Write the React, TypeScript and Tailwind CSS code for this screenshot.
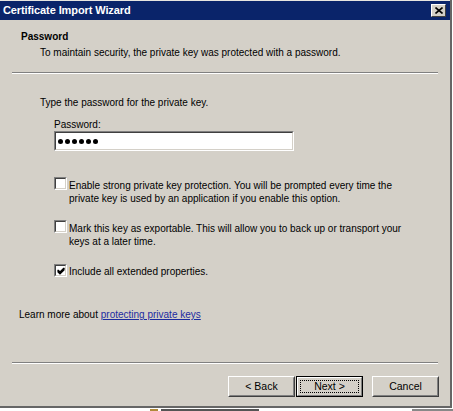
import React from "react";

const font = { fontFamily: '"Liberation Sans", Arial, sans-serif' };

function Checkbox({ checked }: { checked?: boolean }) {
  return (
    <div className="w-[13px] h-[13px] shrink-0 bg-white border-t border-l border-[#808080] border-r border-b border-r-white border-b-white relative">
      <div className="absolute inset-0 border-t border-l border-[#404040] border-r border-b border-r-[#d4d0c8] border-b-[#d4d0c8]">
        {checked && (
          <svg width="11" height="11" viewBox="0 0 11 11" className="block">
            <path d="M2 5 L4 7 L8 3 L8 4 L4 8 L2 6 Z M2 4 L4 6 L8 2" fill="none" stroke="#000" strokeWidth="1.2" />
          </svg>
        )}
      </div>
    </div>
  );
}

function Button({ label, def }: { label: string; def?: boolean }) {
  return (
    <div
      className={
        "w-[67px] h-[21px] bg-[#d4d0c8] flex items-center justify-center text-[10.5px] text-black " +
        (def
          ? "border border-black"
          : "border border-t-white border-l-white border-r-[#404040] border-b-[#404040]")
      }
    >
      {def ? (
        <div className="w-full h-full border border-t-white border-l-white border-r-[#808080] border-b-[#808080] flex items-center justify-center p-[2px]">
          <div className="w-full h-full border border-dotted border-black flex items-center justify-center">
            {label}
          </div>
        </div>
      ) : (
        <div className="w-full h-full border border-r-[#808080] border-b-[#808080] border-t-transparent border-l-transparent flex items-center justify-center">
          {label}
        </div>
      )}
    </div>
  );
}

function Separator() {
  return (
    <div className="mx-[12px] mr-[12px]">
      <div className="h-px bg-[#808080]" />
      <div className="h-px bg-white" />
    </div>
  );
}

export default function App() {
  return (
    <div className="w-[453px] h-[411px] bg-white overflow-hidden relative" style={font}>
      <div className="w-[452px] h-[408px] bg-[#d4d0c8] border-r-2 border-b-2 border-[#666666] flex flex-col text-[10px] leading-[13px] text-black">
        <div className="h-px bg-[#e8e6e0]" />
        <div className="h-[19px] bg-[#0a246a] flex items-center pl-[3px] pr-[4px]">
          <span className="text-white font-bold text-[11px] tracking-[-0.1px]">Certificate Import Wizard</span>
          <div className="ml-auto w-[15px] h-[13px] bg-[#d4d0c8] border border-t-white border-l-white border-r-[#404040] border-b-[#404040] flex items-center justify-center">
            <svg width="8" height="7" viewBox="0 0 8 7">
              <path d="M0.5 0.5 L7.5 6.5 M7.5 0.5 L0.5 6.5" stroke="#000" strokeWidth="1.6" />
            </svg>
          </div>
        </div>

        <div className="pt-[10px] pl-[21px] font-bold">Password</div>
        <div className="mt-[3px] pl-[40px]">To maintain security, the private key was protected with a password.</div>
        <div className="mt-[13px]">
          <Separator />
        </div>

        <div className="mt-[22px] pl-[40px]">Type the password for the private key.</div>
        <div className="mt-[9px] pl-[54px]">Password:</div>
        <div className="pl-[54px]">
          <div className="w-[240px] h-[20px] bg-white border border-t-[#808080] border-l-[#808080] border-r-white border-b-white">
            <div className="w-full h-full border border-t-[#404040] border-l-[#404040] border-r-[#d4d0c8] border-b-[#d4d0c8] flex items-center pl-[2px] gap-[2px]">
              {[0, 1, 2, 3, 4, 5].map((i) => (
                <div key={i} className="w-[5px] h-[5px] rounded-full bg-black" />
              ))}
            </div>
          </div>
        </div>

        <div className="mt-[26px] pl-[54px] flex gap-[2px]">
          <Checkbox />
          <div className="mt-[2px]">
            Enable strong private key protection. You will be prompted every time the
            <br />
            private key is used by an application if you enable this option.
          </div>
        </div>

        <div className="mt-[15px] pl-[54px] flex gap-[2px]">
          <Checkbox />
          <div className="mt-[2px]">
            Mark this key as exportable. This will allow you to back up or transport your
            <br />
            keys at a later time.
          </div>
        </div>

        <div className="mt-[16px] pl-[54px] flex gap-[2px]">
          <Checkbox checked />
          <div className="mt-[1px]">Include all extended properties.</div>
        </div>

        <div className="mt-[30px] pl-[19px]">
          Learn more about{" "}
          <span className="text-[#1c2ba0] underline">protecting private keys</span>
        </div>

        <div className="mt-[41px]">
          <Separator />
        </div>

        <div className="mt-[12px] flex pl-[228px]">
          <Button label="< Back" />
          <div className="ml-[1px]">
            <Button label="Next >" def />
          </div>
          <div className="ml-[9px]">
            <Button label="Cancel" />
          </div>
        </div>
      </div>
      <div className="flex gap-[3px] pl-[150px] pt-[1px]">
        <div className="w-[10px] h-[2px] bg-[#b08a3a]" />
        <div className="w-[120px] h-[2px] bg-[#555]" />
        <div className="ml-[150px] w-[50px] h-[2px] bg-[#888]" />
      </div>
    </div>
  );
}
